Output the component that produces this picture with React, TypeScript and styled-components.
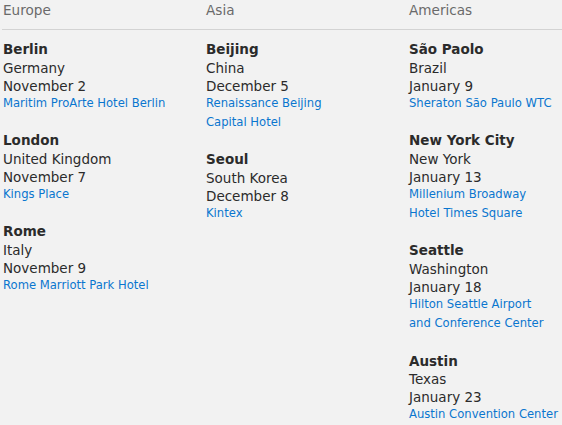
import React from "react";
import styled, { createGlobalStyle } from "styled-components";

const Global = createGlobalStyle`
  html, body { margin: 0; padding: 0; background: #f2f2f2; }
  body { font-family: "DejaVu Sans", "Lucida Grande", sans-serif; -webkit-font-smoothing: antialiased; }
`;

type Event = { city: string; region: string; date: string; venue: string[] };
type Group = { name: string; events: Event[] };

const groups: Group[] = [
  {
    name: "Europe",
    events: [
      { city: "Berlin", region: "Germany", date: "November 2", venue: ["Maritim ProArte Hotel Berlin"] },
      { city: "London", region: "United Kingdom", date: "November 7", venue: ["Kings Place"] },
      { city: "Rome", region: "Italy", date: "November 9", venue: ["Rome Marriott Park Hotel"] },
    ],
  },
  {
    name: "Asia",
    events: [
      { city: "Beijing", region: "China", date: "December 5", venue: ["Renaissance Beijing", "Capital Hotel"] },
      { city: "Seoul", region: "South Korea", date: "December 8", venue: ["Kintex"] },
    ],
  },
  {
    name: "Americas",
    events: [
      { city: "São Paolo", region: "Brazil", date: "January 9", venue: ["Sheraton São Paulo WTC"] },
      { city: "New York City", region: "New York", date: "January 13", venue: ["Millenium Broadway", "Hotel Times Square"] },
      { city: "Seattle", region: "Washington", date: "January 18", venue: ["Hilton Seattle Airport", "and Conference Center"] },
      { city: "Austin", region: "Texas", date: "January 23", venue: ["Austin Convention Center"] },
    ],
  },
];

const Page = styled.div`
  width: 562px;
  height: 425px;
  overflow: hidden;
`;

const HeaderRow = styled.div`
  display: grid;
  grid-template-columns: 203px 203px 1fr;
  padding: 0 0 0 1px;
  height: 29px;
  border-bottom: 1px solid #d3d3d3;
  margin-left: 2px;
`;

const HeaderCell = styled.div`
  font-size: 13.6px;
  line-height: 20px;
  color: #6a6a6a;
`;

const Columns = styled.div`
  display: grid;
  grid-template-columns: 203px 203px 1fr;
  padding: 10.3px 0 0 3px;
`;

const Column = styled.div`
  display: flex;
  flex-direction: column;
  gap: 18.2px;
`;

const EventBlock = styled.div`
  display: flex;
  flex-direction: column;
`;

const Line = styled.div<{ $bold?: boolean }>`
  font-size: 13.5px;
  line-height: 18.3px;
  color: #2b2b2b;
  font-weight: ${(p) => (p.$bold ? 700 : 400)};
  white-space: nowrap;
`;

const VenueList = styled.div`
  display: flex;
  flex-direction: column;
  margin-top: -1px;
`;

const Venue = styled.a`
  font-size: 11.6px;
  line-height: 19px;
  color: #0a76cf;
  text-decoration: none;
  white-space: nowrap;
  display: block;
`;

export default function App() {
  return (
    <Page>
      <Global />
      <HeaderRow>
        {groups.map((g) => (
          <HeaderCell key={g.name}>{g.name}</HeaderCell>
        ))}
      </HeaderRow>
      <Columns>
        {groups.map((g) => (
          <Column key={g.name}>
            {g.events.map((e) => (
              <EventBlock key={e.city}>
                <Line $bold>{e.city}</Line>
                <Line>{e.region}</Line>
                <Line>{e.date}</Line>
                <VenueList>
                  {e.venue.map((v) => (
                    <Venue key={v} href="#">{v}</Venue>
                  ))}
                </VenueList>
              </EventBlock>
            ))}
          </Column>
        ))}
      </Columns>
    </Page>
  );
}
